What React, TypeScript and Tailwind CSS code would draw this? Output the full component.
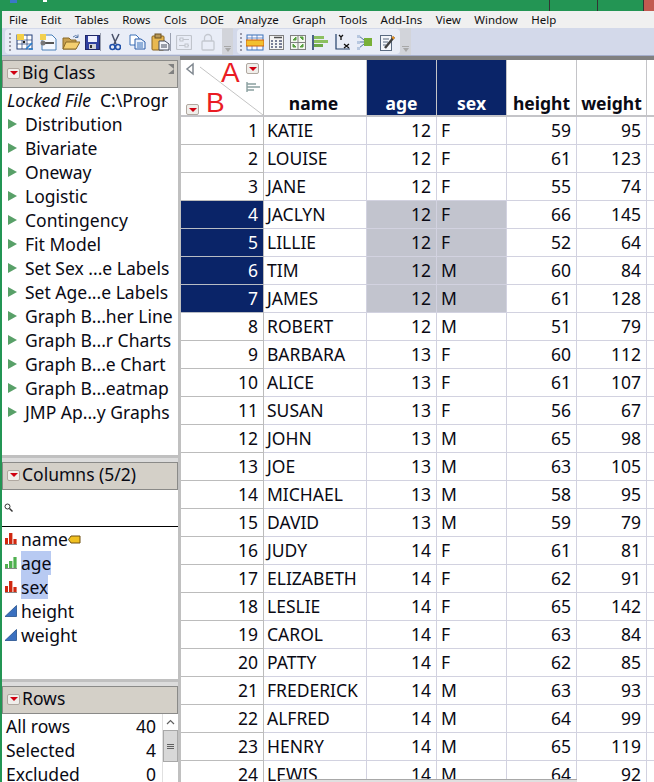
import type { ReactNode } from 'react';

const menus = ['File', 'Edit', 'Tables', 'Rows', 'Cols', 'DOE', 'Analyze', 'Graph', 'Tools', 'Add-Ins', 'View', 'Window', 'Help'];

const tableScripts = [
  'Distribution',
  'Bivariate',
  'Oneway',
  'Logistic',
  'Contingency',
  'Fit Model',
  'Set Sex ...e Labels',
  'Set Age...e Labels',
  'Graph B...her Line',
  'Graph B...r Charts',
  'Graph B...e Chart',
  'Graph B...eatmap',
  'JMP Ap...y Graphs',
];

const rows: [number, string, number, string, number, number][] = [
  [1, 'KATIE', 12, 'F', 59, 95],
  [2, 'LOUISE', 12, 'F', 61, 123],
  [3, 'JANE', 12, 'F', 55, 74],
  [4, 'JACLYN', 12, 'F', 66, 145],
  [5, 'LILLIE', 12, 'F', 52, 64],
  [6, 'TIM', 12, 'M', 60, 84],
  [7, 'JAMES', 12, 'M', 61, 128],
  [8, 'ROBERT', 12, 'M', 51, 79],
  [9, 'BARBARA', 13, 'F', 60, 112],
  [10, 'ALICE', 13, 'F', 61, 107],
  [11, 'SUSAN', 13, 'F', 56, 67],
  [12, 'JOHN', 13, 'M', 65, 98],
  [13, 'JOE', 13, 'M', 63, 105],
  [14, 'MICHAEL', 13, 'M', 58, 95],
  [15, 'DAVID', 13, 'M', 59, 79],
  [16, 'JUDY', 14, 'F', 61, 81],
  [17, 'ELIZABETH', 14, 'F', 62, 91],
  [18, 'LESLIE', 14, 'F', 65, 142],
  [19, 'CAROL', 14, 'F', 63, 84],
  [20, 'PATTY', 14, 'F', 62, 85],
  [21, 'FREDERICK', 14, 'M', 63, 93],
  [22, 'ALFRED', 14, 'M', 64, 99],
  [23, 'HENRY', 14, 'M', 65, 119],
  [24, 'LEWIS', 14, 'M', 64, 92],
];

const Ico = ({ w = 18, className = '', children }: { w?: number; className?: string; children: ReactNode }) => (
  <svg width={w} height="20" viewBox={`0 0 ${w} 20`} className={`shrink-0 ${className}`}>
    {children}
  </svg>
);

const Grip = () => (
  <div className="flex flex-col gap-[2px] shrink-0">
    {[0, 1, 2, 3, 4].map((i) => (
      <div key={i} className="w-[2px] h-[2px] bg-[#9a9aa8]" />
    ))}
  </div>
);

const Sep = () => <div className="w-px h-[18px] bg-[#9aa0b0] shrink-0" />;

const Overflow = () => (
  <div className="w-[11px] h-[27px] bg-[#d2d4da] shrink-0 flex flex-col items-center justify-end pb-[3px]">
    <div className="w-[7px] h-px bg-[#a8a8a8] mb-px" />
    <div className="w-0 h-0 border-x-[3px] border-x-transparent border-t-[4px] border-t-[#a8a8a8]" />
  </div>
);

const RedMenu = () => (
  <div className="w-[13px] h-[11px] rounded-[2px] border border-[#b0a8a0] bg-[#f0eeea] flex items-center justify-center shrink-0">
    <div className="w-0 h-0 border-x-[4px] border-x-transparent border-t-[4px] border-t-[#d00010]" />
  </div>
);

const PanelHeader = ({ title, children }: { title: string; children?: ReactNode }) => (
  <div className="relative h-[28px] bg-[#d4d0c8] border border-[#8a8a88] flex items-center pl-[4px] gap-[2px] text-[17.5px] leading-none pb-[2px]">
    <RedMenu />
    <span>{title}</span>
    {children}
  </div>
);

const Divider = ({ className = '' }: { className?: string }) => (
  <div className={`shrink-0 ${className}`}>
    <div className="h-[3px] bg-[#c0c0c0]" />
    <div className="h-[4px] bg-[#dcdcdc]" />
  </div>
);

const NominalIcon = () => (
  <svg width="12" height="12" viewBox="0 0 12 12" className="shrink-0">
    <rect x="0" y="5" width="3" height="6" fill="#d02810" />
    <rect x="4" y="0" width="3.4" height="11" fill="#d02810" />
    <rect x="8.4" y="6" width="3.2" height="5" fill="#d02810" />
    <rect x="0" y="11" width="12" height="1" fill="#888" />
  </svg>
);

const OrdinalIcon = () => (
  <svg width="12" height="12" viewBox="0 0 12 12" className="shrink-0">
    <rect x="0" y="7" width="3" height="4" fill="#50b050" />
    <rect x="4" y="4" width="3.4" height="7" fill="#50b050" />
    <rect x="8.4" y="0" width="3.2" height="11" fill="#50b050" />
    <rect x="0" y="11" width="12" height="1" fill="#888" />
  </svg>
);

const ContinuousIcon = () => (
  <svg width="12" height="12" viewBox="0 0 12 12" className="shrink-0">
    <path d="M0 11.5 L11.5 0.5 V11.5 Z" fill="#3a70c0" stroke="#24508c" strokeWidth="0.8" />
  </svg>
);

const columnsList = [
  { name: 'name', icon: <NominalIcon />, tag: true },
  { name: 'age', icon: <OrdinalIcon />, selected: true },
  { name: 'sex', icon: <NominalIcon />, selected: true },
  { name: 'height', icon: <ContinuousIcon /> },
  { name: 'weight', icon: <ContinuousIcon /> },
];

const TOOLBAR_FONT = { fontFamily: '"Noto Sans", sans-serif' };

export default function App() {
  return (
    <div className="w-[654px] h-[782px] overflow-hidden flex flex-col bg-[#239554] text-[#0a0a14]" style={TOOLBAR_FONT}>
      {/* window title bar, mostly cut off */}
      <div className="relative h-[11px] shrink-0 flex">
        <div className="absolute left-[10px] top-0 w-[7px] h-[3px] bg-[#3a78c8]" />
        <div className="absolute left-[43px] top-0 w-[4px] h-[2px] bg-white" />
        <div className="flex-1" />
        <div className="w-[48px] border-l-[1.5px] border-[#333]" />
        <div className="w-[46px] border-l-[1.5px] border-[#333]" />
        <div className="w-[11px] bg-[#c25a50] border-l-[1.5px] border-[#333]" />
      </div>

      <div className="flex-1 min-h-0 ml-[2px] flex flex-col bg-white">
        {/* menu bar */}
        <div className="h-[17px] shrink-0 bg-[#f0f0f0] flex items-center pl-[7px] gap-[13.4px] text-[11.5px] leading-none text-[#111]">
          {menus.map((m) => (
            <span key={m}>{m}</span>
          ))}
        </div>

        {/* toolbar */}
        <div className="h-[28px] shrink-0 bg-[#d3d9ea] border-b border-[#a5aecb] flex items-center pl-[3px]">
          <div className="h-[25px] w-[217px] bg-[#e9edf7] rounded-l-[4px] flex items-center pl-[4px] shrink-0">
            <Grip />
            <Ico className="ml-[5px]">
              <rect x="1" y="3" width="15" height="14" fill="#fff" stroke="#24407a" />
              <path d="M1 8 H16 M1 12 H16 M6 3 V17 M11 3 V17" stroke="#24407a" strokeWidth="0.7" />
              <rect x="1" y="2" width="7" height="6" fill="#f4d048" />
              <path d="M10 17 L16 11 M13 17 H17" stroke="#2a80d0" strokeWidth="1.6" />
              <circle cx="8" cy="10" r="1.3" fill="#202020" />
            </Ico>
            <Ico className="ml-[5px]">
              <path d="M3 3 H13 L17 7 V18 H3 Z" fill="#f4f8ff" stroke="#4a80b8" />
              <rect x="1" y="2" width="6" height="6" fill="#f2d050" />
              <path d="M3 11 H15" stroke="#555" strokeWidth="2" />
              <circle cx="4" cy="11" r="2.5" fill="#777" />
            </Ico>
            <Ico className="ml-[5px]">
              <path d="M1 17 V6 H7 L9 8 H14 V17 Z" fill="#c8a050" stroke="#8a6a28" />
              <path d="M1 17 L4 10 H18 L14 17 Z" fill="#f4cf70" stroke="#8a6a28" />
              <path d="M11 5 Q14 2 16 5 M16 2.5 V5.5 H13" stroke="#5878a8" fill="none" />
            </Ico>
            <Ico w={15} className="ml-[5px]">
              <rect x="0.5" y="3.5" width="14" height="14" fill="#3040a0" stroke="#202868" />
              <rect x="3" y="4" width="9" height="6" fill="#eef0ff" />
              <rect x="4" y="12" width="7" height="5" fill="#d0d0d8" />
              <rect x="5" y="13" width="2" height="3" fill="#303030" />
            </Ico>
            <Sep />
            <Ico w={12} className="ml-[8px]">
              <path d="M3 2 L7 12 M10 2 L5 12" stroke="#485068" strokeWidth="1.5" />
              <circle cx="3.5" cy="15" r="2.5" fill="none" stroke="#2050a8" strokeWidth="1.6" />
              <circle cx="9" cy="15" r="2.5" fill="none" stroke="#2050a8" strokeWidth="1.6" />
            </Ico>
            <Ico w={17} className="ml-[8px]">
              <path d="M1 3 H7 L10 6 V13 H1 Z" fill="#fff" stroke="#3a70b8" />
              <path d="M6 7 H12 L16 10 V17 H6 Z" fill="#e8f0fc" stroke="#2a5ca8" />
              <path d="M8 11 H14 M8 13 H14 M8 15 H14" stroke="#3a70b8" />
            </Ico>
            <Ico w={19} className="ml-[5px]">
              <rect x="1" y="4" width="12" height="14" rx="1" fill="#e8b850" stroke="#8a6420" />
              <rect x="4" y="2" width="6" height="4" fill="#b89858" stroke="#6a5020" />
              <path d="M8 9 H14 L18 12 V18 H8 Z" fill="#f4f6fa" stroke="#404858" />
              <path d="M10 13 H16 M10 15 H16" stroke="#404858" />
            </Ico>
            <Sep />
            <Ico w={16} className="ml-[5px]">
              <rect x="0.5" y="3.5" width="15" height="14" rx="1" fill="none" stroke="#c0c4cc" strokeWidth="1.2" />
              <path d="M3 7.5 H13 M3 13.5 H13" stroke="#c0c4cc" />
              <rect x="4" y="6" width="3" height="3" fill="#e9edf7" stroke="#c0c4cc" />
              <rect x="9" y="12" width="3" height="3" fill="#e9edf7" stroke="#c0c4cc" />
            </Ico>
            <Ico w={14} className="ml-[9px]">
              <rect x="1" y="9" width="12" height="9" rx="1" fill="none" stroke="#c4c8d0" strokeWidth="1.3" />
              <path d="M3.5 9 V6 A3.5 3.5 0 0 1 10.5 6 V9" fill="none" stroke="#c4c8d0" strokeWidth="1.3" />
            </Ico>
          </div>
          <Overflow />
          <div className="h-[25px] w-[163px] ml-[4px] bg-[#e9edf7] rounded-l-[4px] rounded-r-[4px] flex items-center pl-[3px] shrink-0">
            <Grip />
            <Ico className="ml-[4px]">
              <rect x="1" y="3" width="16" height="15" fill="#f8f8ff" stroke="#3a70b8" />
              <path d="M6 3 V18 M11 3 V18 M1 6 H17" stroke="#3a70b8" strokeWidth="0.7" />
              <rect x="0" y="8" width="18" height="6" fill="#f2c030" stroke="#d06010" />
            </Ico>
            <Ico w={15} className="ml-[5px]">
              <rect x="0.5" y="3.5" width="14" height="14" fill="#f4f4f4" stroke="#808080" />
              <path d="M5 5.5 H13" stroke="#505050" strokeWidth="1.5" />
              <path d="M2 9 H4 M6 9 H8 M10 9 H13 M2 12 H4 M6 12 H8 M10 12 H13 M2 15 H4 M6 15 H8 M10 15 H13" stroke="#505878" strokeWidth="1.4" />
            </Ico>
            <Ico w={16} className="ml-[6px]">
              <rect x="0.5" y="3.5" width="15" height="14" fill="#f4f8f0" stroke="#808080" />
              <path d="M8 3.5 V17.5 M0.5 10.5 H15.5" stroke="#808080" />
              <path d="M3 8 L6 5 V8 Z M10 5 H13 V8 Z M3 12 V15 H6 Z M13 15 H10 L13 12 Z" fill="#58a040" stroke="#58a040" />
            </Ico>
            <Ico w={17} className="ml-[6px]">
              <path d="M1 3 V18" stroke="#24406a" strokeWidth="1.6" />
              <rect x="2" y="4" width="10" height="3" fill="#8cc060" />
              <rect x="2" y="8" width="14" height="3" fill="#8cc060" />
              <rect x="2" y="12" width="9" height="3" fill="#6ca848" />
            </Ico>
            <Ico w={15} className="ml-[6px]">
              <path d="M1 2 V17 H15" stroke="#24406a" fill="none" strokeWidth="1.2" />
              <path d="M4 3 L6 5 V8 M8 3 L6 5 M9 12 L14 16 M14 12 L9 16" stroke="#101010" strokeWidth="1.3" fill="none" />
            </Ico>
            <Ico w={15} className="ml-[7px]">
              <rect x="7" y="6" width="8" height="8" fill="#78b038" />
              <path d="M2 4 L7 8 M2 10 H7 M2 16 L7 12" stroke="#5070a0" />
              <rect x="0" y="3" width="3" height="3" fill="#b8c8e0" />
              <rect x="0" y="9" width="3" height="3" fill="#b8c8e0" />
              <rect x="0" y="15" width="3" height="3" fill="#b8c8e0" />
            </Ico>
            <Ico w={15} className="ml-[8px]">
              <rect x="0.5" y="3.5" width="11" height="15" fill="#f4f6fa" stroke="#5a6a80" />
              <path d="M3 7 H9 M3 10 H8 M3 13 H6" stroke="#5a6a80" />
              <path d="M5 16 L14 5" stroke="#404040" strokeWidth="2.4" />
              <path d="M12.5 6.5 L14 5" stroke="#e89020" strokeWidth="2.6" />
            </Ico>
          </div>
          <Overflow />
        </div>

        {/* separator strip above the panels */}
        <div className="h-[4px] shrink-0 flex">
          <div className="w-[178px] bg-[#c0c0c0]" />
          <div className="flex-1 bg-[#808080]" />
        </div>

        <div className="flex-1 min-h-0 flex">
          {/* left panels */}
          <div className="w-[176px] shrink-0 flex flex-col text-[17.5px] leading-[24px]">
            <PanelHeader title="Big Class">
              <div className="absolute right-[3px] top-[3px] w-0 h-0 border-y-[5px] border-y-[#808080] border-l-[6px] border-l-[#d4d0c8]" />
            </PanelHeader>
            <div className="h-[367px] shrink-0 overflow-hidden">
              <div className="pl-[5px] whitespace-nowrap">
                <i>Locked File</i>
                <span className="ml-[9px]">C:\Progr</span>
              </div>
              {tableScripts.map((s) => (
                <div key={s} className="flex items-center pl-[6px] whitespace-nowrap">
                  <div className="w-0 h-0 border-y-[5.5px] border-y-transparent border-l-[9px] border-l-[#58a068] mr-[8px]" />
                  {s}
                </div>
              ))}
            </div>
            <Divider />
            <PanelHeader title="Columns (5/2)" />
            <div className="h-[37px] shrink-0 border-b border-black flex items-center pl-[2px] pb-[2px]">
              <svg width="9" height="9" viewBox="0 0 9 9">
                <circle cx="3.5" cy="3.5" r="2.5" fill="none" stroke="#333" />
                <path d="M5.5 5.5 L8.5 8.5" stroke="#333" strokeWidth="1.4" />
              </svg>
            </div>
            <div className="h-[152px] shrink-0">
              {columnsList.map((c) => (
                <div key={c.name} className="h-[24px] flex items-center pl-[3px] gap-[4px]">
                  {c.icon}
                  <span className={c.selected ? 'bg-[#b8caf2]' : ''}>{c.name}</span>
                  {c.tag && (
                    <svg width="13" height="9" viewBox="0 0 13 9" className="-ml-[4px]">
                      <path d="M3 1 H12 V8 H3 L0.5 4.5 Z" fill="#f0c020" stroke="#705010" />
                    </svg>
                  )}
                </div>
              ))}
            </div>
            <Divider />
            <PanelHeader title="Rows" />
            <div className="flex-1 min-h-0 flex overflow-hidden">
              <div className="flex-1 pl-[4px] pr-[6px]">
                {[
                  ['All rows', 40],
                  ['Selected', 4],
                  ['Excluded', 0],
                ].map(([label, value]) => (
                  <div key={label} className="flex justify-between h-[24px]">
                    <span>{label}</span>
                    <span>{value}</span>
                  </div>
                ))}
              </div>
              <div className="w-[16px] shrink-0 border-l border-[#e0e0e0] flex flex-col items-center">
                <svg width="9" height="16" viewBox="0 0 9 16">
                  <path d="M1 10 L4.5 6.5 L8 10" fill="none" stroke="#606060" strokeWidth="1.2" />
                </svg>
                <div className="w-[15px] h-[32px] bg-[#d8d8d8] border border-[#a8a8a8] flex flex-col items-center justify-center gap-px">
                  <div className="w-[7px] h-px bg-[#606060]" />
                  <div className="w-[7px] h-px bg-[#606060]" />
                  <div className="w-[7px] h-px bg-[#606060]" />
                </div>
              </div>
            </div>
          </div>

          <div className="w-[3px] shrink-0 bg-[#c0c0c0]" />

          {/* data grid */}
          <div className="relative flex-1 min-w-0 overflow-hidden bg-white">
            <div className="flex h-[57px] border-b-2 border-[#c4c4c8] text-[17.5px] font-bold leading-none">
              <div className="relative w-[83px] shrink-0 border-r border-[#bcbcbc]">
                <svg width="83" height="55" viewBox="0 0 83 55" className="absolute inset-0">
                  <path d="M19 7 L82 55" stroke="#c4c4c4" />
                  <path d="M12 4 L6 9 L12 14 Z" fill="none" stroke="#808890" strokeWidth="1.5" />
                  <path d="M66 32 V22 M66 24 H75 M66 27 H79 M66 30 H73" stroke="#8ba0a0" strokeWidth="1.4" />
                </svg>
                <span className="absolute left-[40px] top-[-3px] text-[28px] font-normal text-[#ea1c24]" style={{ fontFamily: '"Liberation Sans", sans-serif', lineHeight: '32px' }}>A</span>
                <span className="absolute left-[25px] top-[27px] text-[28px] font-normal text-[#ea1c24]" style={{ fontFamily: '"Liberation Sans", sans-serif', lineHeight: '32px' }}>B</span>
                <div className="absolute left-[65px] top-[3px]"><RedMenu /></div>
                <div className="absolute left-[5px] top-[44px]"><RedMenu /></div>
              </div>
              <div className="w-[103px] shrink-0 border-r border-[#c4c4c8] flex items-end justify-center pb-[3px] pr-[3px]">name</div>
              <div className="w-[70px] shrink-0 border-r border-[#c4c4c8] bg-[#0a2468] text-white flex items-end justify-center pb-[3px]">age</div>
              <div className="w-[70px] shrink-0 border-r border-[#c4c4c8] bg-[#0a2468] text-white flex items-end justify-center pb-[3px]">sex</div>
              <div className="w-[70px] shrink-0 border-r border-[#c4c4c8] flex items-end justify-center pb-[3px]">height</div>
              <div className="w-[70px] shrink-0 border-r border-[#c4c4c8] flex items-end justify-center pb-[3px]">weight</div>
            </div>
            {rows.map(([n, name, age, sex, h, w]) => {
              const sel = n >= 4 && n <= 7;
              return (
                <div key={n} className="flex h-[28px] text-[17.5px] leading-[26px]">
                  <div className={`w-[83px] shrink-0 text-right pr-[5px] border-r border-b ${sel ? 'bg-[#0a2468] text-white border-r-[#bcbcbc] border-b-[#b8bcc4]' : 'border-[#bcbcbc]'}`}>{n}</div>
                  <div className="w-[103px] shrink-0 pl-[3px] border-r border-b border-[#d2d2e0]">{name}</div>
                  <div className={`w-[70px] shrink-0 text-right pr-[5px] border-r border-b border-[#d2d2e0] ${sel ? 'bg-[#c2c4ce]' : ''}`}>{age}</div>
                  <div className={`w-[70px] shrink-0 pl-[4px] border-r border-b border-[#d2d2e0] ${sel ? 'bg-[#c2c4ce]' : ''}`}>{sex}</div>
                  <div className="w-[70px] shrink-0 text-right pr-[5px] border-r border-b border-[#d2d2e0]">{h}</div>
                  <div className="w-[70px] shrink-0 text-right pr-[5px] border-r border-b border-[#d2d2e0]">{w}</div>
                  <div className="flex-1 border-b border-[#d2d2e0]" />
                </div>
              );
            })}
            {/* horizontal scrollbar thumb along the bottom edge */}
            <div className="absolute left-[99px] bottom-0 w-[297px] h-[3px] bg-[#e0e0e0] border-t border-[#a8a8a8]" />
          </div>
        </div>
      </div>
    </div>
  );
}
